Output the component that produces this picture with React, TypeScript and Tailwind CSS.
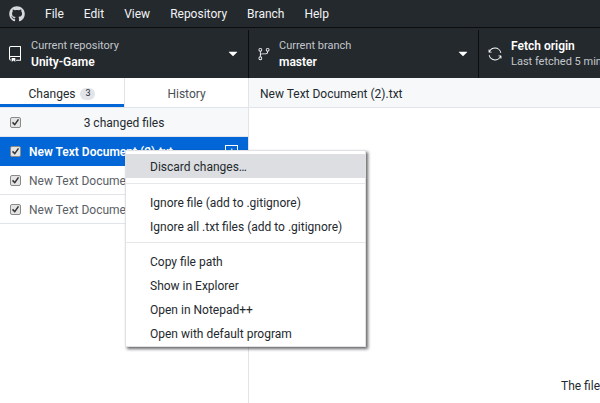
import React from 'react';
import { FaGithub } from 'react-icons/fa';
import { GoRepo, GoGitBranch, GoSync, GoTriangleDown } from 'react-icons/go';

const files = ['New Text Document (2).txt', 'New Text Document (3).txt', 'New Text Document.txt'];
const menus = ['File', 'Edit', 'View', 'Repository', 'Branch', 'Help'];

const Check = () => (
  <span className="flex h-[11px] w-[11px] shrink-0 items-center justify-center rounded-[2px] border border-[#8a8a8a] bg-[#e4e4e4]">
    <svg viewBox="0 0 12 12" className="h-[10px] w-[10px]">
      <path d="M2 6.5 5 9.5 10 2.5" fill="none" stroke="#333" strokeWidth="2" />
    </svg>
  </span>
);

const MenuItem = ({ label, active }: { label: string; active?: boolean }) => (
  <div className={`flex h-6 items-center pl-6 pt-px text-[#24292e] ${active ? 'bg-[#dcdee1]' : ''}`}>{label}</div>
);

export default function App() {
  return (
    <div className="relative flex h-[403px] w-[600px] flex-col overflow-hidden bg-white font-['Roboto',sans-serif] text-[12px] text-[#24292e]">
      <div className="flex h-[28px] shrink-0 items-center border-b border-[#0b0d0f] bg-[#24292e] text-[#f2f3f4]">
        <FaGithub className="ml-[9px] mr-[20px] text-[16px] text-[#d6d8da]" />
        <div className="flex gap-[20px]">
          {menus.map((m) => (
            <span key={m}>{m}</span>
          ))}
        </div>
      </div>

      <div className="flex h-[50px] shrink-0 bg-[#24292e] pt-[2px] text-white">
        <div className="flex w-[249px] items-center border-r border-[#0b0d0f] pl-[7px] pr-[7px]">
          <GoRepo className="mr-[8px] text-[16px]" />
          <div className="flex-1 leading-[16px]">
            <div className="text-[11px] text-[#c3c7cb]">Current repository</div>
            <div className="font-semibold">Unity-Game</div>
          </div>
          <GoTriangleDown className="text-[16px]" />
        </div>
        <div className="flex w-[230px] items-center border-r border-[#0b0d0f] pl-[8px] pr-[7px]">
          <GoGitBranch className="mr-[8px] text-[14px]" />
          <div className="flex-1 leading-[16px]">
            <div className="text-[11px] text-[#c3c7cb]">Current branch</div>
            <div className="font-semibold">master</div>
          </div>
          <GoTriangleDown className="text-[16px]" />
        </div>
        <div className="flex flex-1 items-center overflow-hidden pl-[9px]">
          <GoSync className="mr-[9px] shrink-0 text-[14px]" />
          <div className="whitespace-nowrap leading-[16px]">
            <div className="font-semibold">Fetch origin</div>
            <div className="text-[11px] text-[#c3c7cb]">Last fetched 5 minutes ago</div>
          </div>
        </div>
      </div>

      <div className="flex min-h-0 flex-1">
        <div className="flex w-[249px] shrink-0 flex-col border-r border-[#e1e4e8]">
          <div className="flex h-[30px] shrink-0 border-b border-[#e1e4e8]">
            <div className="flex w-[124px] items-center justify-center gap-[5px] border-b-[3px] border-[#0366d6] pt-[5px]">
              Changes
              <span className="flex h-[12px] w-[15px] items-center justify-center rounded-full bg-[#e1e4e8] text-[9px]">3</span>
            </div>
            <div className="flex flex-1 items-center justify-center border-l border-[#e1e4e8] pt-[3px] text-[#4a5056]">History</div>
          </div>
          <div className="flex h-[29px] shrink-0 items-center border-b border-[#e1e4e8] bg-[#f6f8fa] pl-[10px]">
            <Check />
            <span className="flex-1 pr-[21px] pt-px text-center">3 changed files</span>
          </div>
          {files.map((f, i) => (
            <div
              key={f}
              className={`flex h-[29px] shrink-0 items-center whitespace-nowrap border-b pl-[10px] ${
                i === 0 ? 'border-[#0366d6] bg-[#0366d6] font-semibold text-white' : 'border-[#e1e4e8] text-[#5a6066]'
              }`}
            >
              <Check />
              <span className="ml-[8px] flex-1 pt-px">{f}</span>
              {i === 0 && (
                <span className="mr-[10px] flex h-[13px] w-[13px] items-center justify-center border border-white text-[11px] font-normal leading-none">+</span>
              )}
            </div>
          ))}
        </div>

        <div className="flex min-w-0 flex-1 flex-col">
          <div className="flex h-[30px] shrink-0 items-center border-b border-[#e1e4e8] bg-[#f6f8fa] pl-[11px] pt-[3px]">New Text Document (2).txt</div>
          <div className="flex flex-1 items-end whitespace-nowrap pb-[8px] pl-[312px]">The file</div>
        </div>
      </div>

      <div className="absolute left-[125px] top-[150px] w-[241px] border border-[#dfe1e4] bg-white pb-[1px] pt-[3px] shadow-[2px_2px_3px_rgba(0,0,0,0.6)]">
        <MenuItem label="Discard changes…" active />
        <div className="mb-[6px] mt-[5px] h-px bg-[#e6e8ea]" />
        <MenuItem label="Ignore file (add to .gitignore)" />
        <MenuItem label="Ignore all .txt files (add to .gitignore)" />
        <div className="mb-[6px] mt-[4px] h-px bg-[#e6e8ea]" />
        <MenuItem label="Copy file path" />
        <MenuItem label="Show in Explorer" />
        <MenuItem label="Open in Notepad++" />
        <MenuItem label="Open with default program" />
      </div>
    </div>
  );
}
